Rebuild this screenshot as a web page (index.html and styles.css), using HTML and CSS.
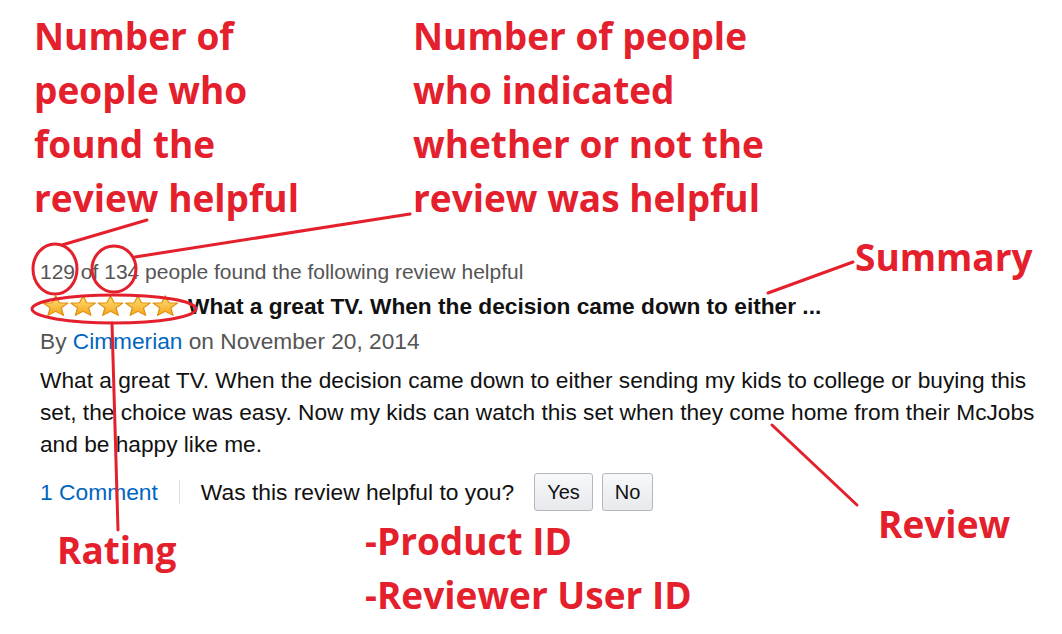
FILE: index.html
```html
<!DOCTYPE html>
<html lang="en">
<head>
    <meta charset="UTF-8">
    <meta name="viewport" content="width=device-width, initial-scale=1.0">
    <title>Anatomy of a review</title>
    <link rel="stylesheet" href="styles.css">
</head>
<body>
    <div class="page">
        <div class="top-notes">
            <div class="note note-found">Number of<br>people who<br>found the<br>review helpful</div>
            <div class="note note-voted">Number of people<br>who indicated<br>whether or not the<br>review was helpful</div>
        </div>

        <div class="review">
            <div class="helpful">129 of 134 people found the following review helpful</div>
            <div class="title-row">
                <span class="stars">
                    <svg width="137" height="22" viewBox="0 0 140 27" preserveAspectRatio="none">
                        <defs>
                            <linearGradient id="gold" x1="0" y1="0" x2="0" y2="1">
                                <stop offset="0" stop-color="#ffe27a"/>
                                <stop offset="1" stop-color="#f3a51d"/>
                            </linearGradient>
                            <polygon id="star" points="14,1 17.6,9.4 26.5,10 19.7,15.8 21.9,25 14,20.1 6.1,25 8.3,15.8 1.5,10 10.4,9.4" fill="url(#gold)" stroke="#e0900e" stroke-width="1.3" stroke-linejoin="round"/>
                        </defs>
                        <use href="#star" x="0"/>
                        <use href="#star" x="28"/>
                        <use href="#star" x="56"/>
                        <use href="#star" x="84"/>
                        <use href="#star" x="112"/>
                    </svg>
                </span>
                <span class="summary">What a great TV. When the decision came down to either ...</span>
            </div>
            <div class="byline">By <a href="#">Cimmerian</a> on November 20, 2014</div>
            <p class="body">What a great TV. When the decision came down to either sending my kids to college or buying this set, the choice was easy. Now my kids can watch this set when they come home from their McJobs and be happy like me.</p>
            <div class="actions">
                <a href="#" class="comments">1 Comment</a>
                <span class="divider"></span>
                <span class="ask">Was this review helpful to you?</span>
                <button>Yes</button>
                <button>No</button>
            </div>
        </div>

        <div class="bottom-notes">
            <div class="note note-rating">Rating</div>
            <div class="note note-ids">-Product ID<br>-Reviewer User ID</div>
        </div>

        <div class="note note-summary">Summary</div>
        <div class="note note-review">Review</div>

        <!-- callout lines and rings -->
        <svg class="callouts" width="1062" height="634" viewBox="0 0 1062 634">
            <g fill="none" stroke="#e3202c" stroke-width="3" stroke-linecap="round">
                <ellipse cx="55" cy="269" rx="22" ry="25"/>
                <line x1="62" y1="245" x2="147" y2="220"/>
                <ellipse cx="114" cy="269" rx="22" ry="23"/>
                <line x1="135" y1="257" x2="410" y2="214"/>
                <ellipse cx="114" cy="309" rx="82" ry="14"/>
                <line x1="112" y1="323" x2="118" y2="530"/>
                <line x1="768" y1="293" x2="853" y2="262"/>
                <line x1="772" y1="425" x2="857" y2="505"/>
            </g>
        </svg>
    </div>
</body>
</html>
```

FILE: styles.css
```css
body {
    margin: 0;
    background-color: #fff;
}

.page {
    position: relative;
    width: 1062px;
    height: 634px;
    overflow: hidden;
}

.note {
    font-family: "Open Sans", sans-serif;
    font-weight: bold;
    color: #e3202c;
    font-size: 37px;
    line-height: 54px;
    white-space: nowrap;
}

.top-notes {
    display: flex;
    padding-top: 9px;
}

.note-found {
    margin-left: 34px;
    width: 379px;
}

.review {
    margin-top: 33px;
    padding-left: 40px;
    font-family: "Liberation Sans", Arial, sans-serif;
    color: #111;
}

.helpful {
    font-size: 21px;
    line-height: 28px;
    color: #555;
}

.title-row {
    display: flex;
    align-items: center;
    height: 40px;
}

.stars {
    display: flex;
    margin-left: 2px;
    margin-right: 9px;
}

.summary {
    font-size: 22.7px;
    font-weight: bold;
}

.byline {
    font-size: 22.7px;
    line-height: 30px;
    color: #555;
}

.byline a,
.comments {
    color: #0066c0;
    text-decoration: none;
}

.body {
    margin: 8px 0 0;
    font-size: 22.7px;
    line-height: 32px;
    width: 1005px;
}

.actions {
    display: flex;
    align-items: center;
    margin-top: 13px;
    font-size: 22.8px;
}

.divider {
    width: 1px;
    height: 24px;
    background-color: #ddd;
    margin: 0 21px;
}

.ask {
    margin-right: 20px;
}

.actions button {
    font-family: "Liberation Sans", Arial, sans-serif;
    font-size: 20px;
    color: #111;
    height: 38px;
    padding: 0 12px;
    margin-right: 9px;
    border: 1px solid #b4b7bd;
    border-radius: 3px;
    background: linear-gradient(#f7f8fa, #e7e9ec);
}

.bottom-notes {
    display: flex;
    align-items: flex-start;
    margin-top: 3px;
}

.note-rating {
    margin-left: 57px;
    margin-top: 9px;
    width: 308px;
}

.note-summary {
    position: absolute;
    left: 855px;
    top: 230px;
}

.note-review {
    position: absolute;
    left: 878px;
    top: 497px;
}

.callouts {
    position: absolute;
    left: 0;
    top: 0;
    pointer-events: none;
}
```
